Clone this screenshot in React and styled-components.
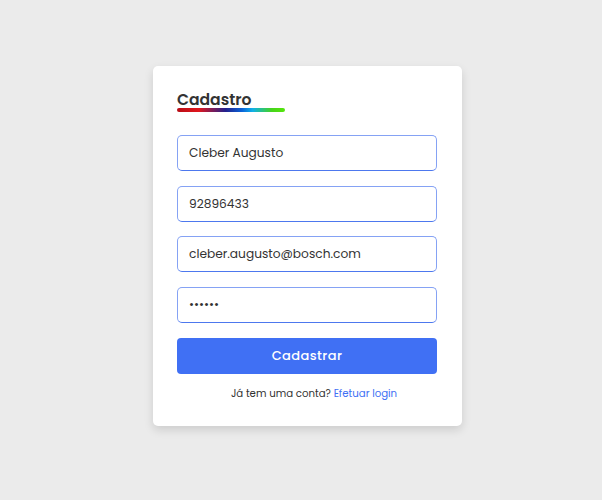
import React from "react";
import styled, { createGlobalStyle } from "styled-components";

const Global = createGlobalStyle`
  html, body { margin: 0; padding: 0; background: #ebebeb; }
  * { box-sizing: border-box; }
  body { font-family: "Poppins", "Open Sans", "Noto Sans", sans-serif; }
`;

const Page = styled.div`
  min-height: 500px;
  display: flex;
  align-items: center;
  justify-content: center;
  padding: 0 0 8px 13px;
`;

const Card = styled.div`
  width: 309px;
  background: #fff;
  border-radius: 5px;
  box-shadow: 0 4px 10px rgba(0, 0, 0, 0.13);
  padding: 24px 25px 24px 24px;
  display: flex;
  flex-direction: column;
`;

const Title = styled.h1`
  position: relative;
  align-self: flex-start;
  margin: 0 0 25px;
  font-size: 15.6px;
  line-height: 20px;
  font-weight: 600;
  color: #333;
  &::after {
    content: "";
    position: absolute;
    left: 0;
    bottom: -2px;
    width: 108px;
    height: 4px;
    border-radius: 2px;
    background: linear-gradient(90deg, #b80d16 0%, #e0161e 20%, #22218d 45%, #0a62d8 60%, #10b0e8 70%, #47d41a 88%, #55e60c 100%);
  }
`;

const Field = styled.input`
  display: block;
  width: 100%;
  height: 36px;
  margin: 0 0 14.5px;
  padding: 0 11px;
  border: 1px solid #85a2f4;
  border-bottom: 1.5px solid #4d78ee;
  border-radius: 5px;
  outline: none;
  font-family: inherit;
  font-size: 12.2px;
  color: #333;
  background: #fff;
`;

const Button = styled.button`
  height: 36px;
  width: 100%;
  margin-top: 0.5px;
  border: none;
  border-radius: 4px;
  background: #4070f4;
  color: #fff;
  font-family: inherit;
  font-size: 13px;
  font-weight: 500;
  letter-spacing: 0.4px;
`;

const Footer = styled.p`
  margin: 12px 0 0 14px;
  text-align: center;
  font-size: 10.2px;
  line-height: 16px;
  color: #333;
`;

const Link = styled.a`
  color: #4070f4;
  text-decoration: none;
`;

export default function App() {
  return (
    <>
      <Global />
      <Page>
        <Card>
          <Title>Cadastro</Title>
          <Field type="text" defaultValue="Cleber Augusto" />
          <Field type="text" defaultValue="92896433" />
          <Field type="email" defaultValue="cleber.augusto@bosch.com" />
          <Field type="password" defaultValue="123456" />
          <Button>Cadastrar</Button>
          <Footer>
            Já tem uma conta? <Link href="#">Efetuar login</Link>
          </Footer>
        </Card>
      </Page>
    </>
  );
}
